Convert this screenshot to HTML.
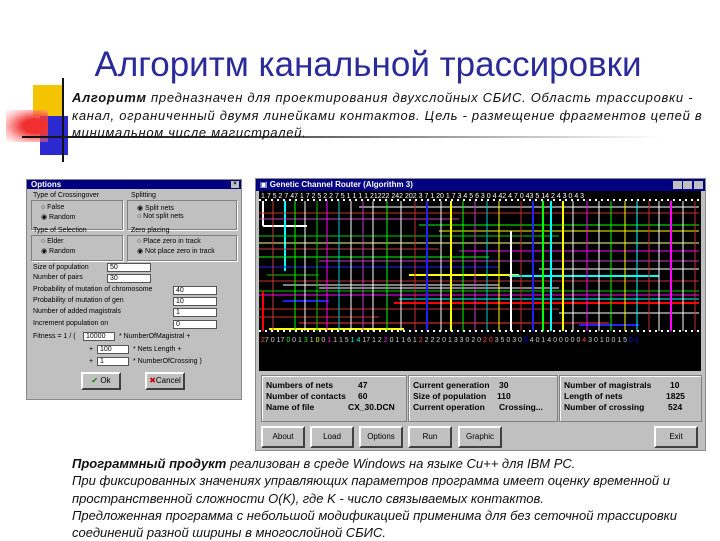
<!DOCTYPE html>
<html><head><meta charset="utf-8">
<style>
*{margin:0;padding:0;box-sizing:border-box}
body{width:720px;height:540px;background:#fff;position:relative;overflow:hidden;font-family:"Liberation Sans","DejaVu Sans",sans-serif}
.abs{position:absolute}
.title{left:0;width:736px;top:45px;text-align:center;font-size:35px;color:#2a2a9a}
.para{left:72px;top:89px;width:640px;font-size:13px;letter-spacing:0.72px;line-height:17.5px;font-style:italic;color:#111}
.bot{left:72px;top:455px;width:660px;font-size:13px;line-height:17.3px;font-style:italic;color:#111;white-space:nowrap}
.win{background:#c0c0c0;border:1px solid #888}
.tb{background:#000080;color:#fff;font-size:8px;font-weight:bold;height:10px;line-height:10px;padding-left:4px}
.lbl{font-size:7px;color:#000;white-space:nowrap}
.inp{background:#fff;border:1px solid #555;font-size:7px;line-height:8px;padding-left:2px}
.grp{border:1px solid #808080;box-shadow:1px 1px 0 #fff}
.btn{background:#c0c0c0;border:2px solid;border-color:#fff #404040 #404040 #fff;font-size:8px;text-align:center}
.pan{border:1px solid #808080;box-shadow:inset 1px 1px 0 #fff;font-size:8.5px;font-weight:bold;line-height:11px;padding:4px 4px}
</style></head><body>

<div class="abs title">Алгоритм канальной трассировки</div>

<div class="abs" style="left:33px;top:85px;width:30px;height:31px;background:#f5c400"></div>
<div class="abs" style="left:40px;top:116px;width:28px;height:39px;background:#2a2ad0"></div>
<div class="abs" style="left:6px;top:110px;width:42px;height:32px;background:radial-gradient(ellipse at 70% 50%,#f03030 30%,rgba(255,120,120,.5) 70%,rgba(255,255,255,0) 100%)"></div>
<div class="abs" style="left:62px;top:78px;width:2px;height:84px;background:#111"></div>
<div class="abs" style="left:22px;top:136px;width:640px;height:2px;background:linear-gradient(90deg,#111 0%,#333 30%,#aaa 70%,rgba(255,255,255,0) 100%)"></div>

<div class="abs para"><b>Алгоритм</b> предназначен для проектирования двухслойных СБИС. Область трассировки - канал, ограниченный двумя линейками контактов. Цель - размещение фрагментов цепей в минимальном числе магистралей.</div>

<div class="abs win" style="left:26px;top:179px;width:216px;height:221px;">
 <div class="tb" style="height:9px;line-height:9px">Options<span style="float:right;background:#c0c0c0;color:#000;width:8px;height:7px;margin:1px 2px;font-size:6px;line-height:7px;text-align:center">×</span></div>
 <div class="abs lbl" style="left:6px;top:12px">Type of Crossingover</div>
 <div class="abs grp" style="left:4px;top:20px;width:92px;height:30px"></div>
 <div class="abs lbl" style="left:14px;top:24px">○ False</div>
 <div class="abs lbl" style="left:14px;top:33px">◉ Random</div>
 <div class="abs lbl" style="left:104px;top:12px">Splitting</div>
 <div class="abs grp" style="left:100px;top:20px;width:110px;height:30px"></div>
 <div class="abs lbl" style="left:110px;top:24px">◉ Split nets</div>
 <div class="abs lbl" style="left:110px;top:33px">○ Not split nets</div>
 <div class="abs lbl" style="left:6px;top:47px">Type of Selection</div>
 <div class="abs grp" style="left:4px;top:55px;width:92px;height:26px"></div>
 <div class="abs lbl" style="left:14px;top:58px">○ Elder</div>
 <div class="abs lbl" style="left:14px;top:67px">◉ Random</div>
 <div class="abs lbl" style="left:104px;top:47px">Zero placing</div>
 <div class="abs grp" style="left:100px;top:55px;width:110px;height:26px"></div>
 <div class="abs lbl" style="left:110px;top:58px">○ Place zero in track</div>
 <div class="abs lbl" style="left:110px;top:67px">◉ Not place zero in track</div>
 <div class="abs lbl" style="left:6px;top:84px">Size of population</div>
 <div class="abs inp" style="left:80px;top:83px;width:44px;height:9px">50</div>
 <div class="abs lbl" style="left:6px;top:94px">Number of pairs</div>
 <div class="abs inp" style="left:80px;top:94px;width:44px;height:9px">30</div>
 <div class="abs lbl" style="left:6px;top:106px">Probability of mutation of chromosome</div>
 <div class="abs inp" style="left:146px;top:106px;width:44px;height:9px">40</div>
 <div class="abs lbl" style="left:6px;top:117px">Probability of mutation of gen</div>
 <div class="abs inp" style="left:146px;top:117px;width:44px;height:9px">10</div>
 <div class="abs lbl" style="left:6px;top:128px">Number of added magistrals</div>
 <div class="abs inp" style="left:146px;top:128px;width:44px;height:9px">1</div>
 <div class="abs lbl" style="left:6px;top:140px">Increment population on</div>
 <div class="abs inp" style="left:146px;top:140px;width:44px;height:9px">0</div>
 <div class="abs lbl" style="left:6px;top:153px">Fitness = 1 / ( </div>
 <div class="abs inp" style="left:56px;top:152px;width:32px;height:9px">10000</div>
 <div class="abs lbl" style="left:92px;top:153px">* NumberOfMagistral +</div>
 <div class="abs lbl" style="left:62px;top:166px">+</div>
 <div class="abs inp" style="left:70px;top:165px;width:32px;height:9px">100</div>
 <div class="abs lbl" style="left:106px;top:166px">* Nets Length +</div>
 <div class="abs lbl" style="left:62px;top:178px">+</div>
 <div class="abs inp" style="left:70px;top:177px;width:32px;height:9px">1</div>
 <div class="abs lbl" style="left:106px;top:178px">* NumberOfCrossing )</div>
 <div class="abs btn" style="left:54px;top:192px;width:40px;height:18px;line-height:14px"><span style="color:#080">✔</span> Ok</div>
 <div class="abs btn" style="left:118px;top:192px;width:40px;height:18px;line-height:14px"><span style="color:#c00">✖</span>Cancel</div>
</div>

<div class="abs win" style="left:255px;top:178px;width:451px;height:273px;">
 <div class="tb" style="height:12px;line-height:12px;background:#000080">▣ Genetic Channel Router (Algorithm 3)
  <span style="float:right;margin-right:2px;font-size:6px;color:#000"><span style="background:#c0c0c0;display:inline-block;width:9px;height:8px;margin-top:2px"></span> <span style="background:#c0c0c0;display:inline-block;width:9px;height:8px"></span> <span style="background:#c0c0c0;display:inline-block;width:9px;height:8px"></span></span></div>
 <div class="abs" style="left:3px;top:12px;width:442px;height:180px;background:#000;overflow:hidden">
 <svg width="442" height="180" viewBox="0 0 442 180" style="display:block">
  <g stroke-width="1" fill="none">
   <line x1="4" y1="35" x2="48" y2="35" stroke="#fff" stroke-width="2"/>
   <line x1="4" y1="10" x2="4" y2="35" stroke="#fff" stroke-width="2"/>
   <line x1="26" y1="10" x2="26" y2="80" stroke="#0ff" stroke-width="2"/>
   <line x1="0" y1="22" x2="440" y2="22" stroke="#c03030"/>
   <line x1="0" y1="28" x2="200" y2="28" stroke="#c040c0"/>
   <line x1="100" y1="16" x2="440" y2="16" stroke="#fff"/>
   <line x1="180" y1="40" x2="440" y2="40" stroke="#ff0"/>
   <line x1="0" y1="45" x2="300" y2="45" stroke="#0c0"/>
   <line x1="160" y1="34" x2="440" y2="34" stroke="#0f0"/>
   <line x1="0" y1="52" x2="440" y2="52" stroke="#ff8"/>
   <line x1="0" y1="58" x2="180" y2="58" stroke="#c04040"/>
   <line x1="200" y1="60" x2="440" y2="60" stroke="#f0f"/>
   <line x1="0" y1="66" x2="230" y2="66" stroke="#0f0"/>
   <line x1="60" y1="70" x2="440" y2="70" stroke="#c040c0"/>
   <line x1="0" y1="76" x2="240" y2="76" stroke="#2020f0"/>
   <line x1="280" y1="78" x2="440" y2="78" stroke="#fff"/>
   <line x1="8" y1="84" x2="60" y2="84" stroke="#0c0"/>
   <line x1="150" y1="84" x2="260" y2="84" stroke="#ff0" stroke-width="2"/>
   <line x1="250" y1="85" x2="400" y2="85" stroke="#0ff" stroke-width="2"/>
   <line x1="0" y1="90" x2="440" y2="90" stroke="#c03030"/>
   <line x1="24" y1="94" x2="240" y2="94" stroke="#fff"/>
   <line x1="0" y1="100" x2="440" y2="100" stroke="#0c0"/>
   <line x1="60" y1="97" x2="300" y2="97" stroke="#fff"/>
   <line x1="0" y1="104" x2="440" y2="104" stroke="#f0f"/>
   <line x1="140" y1="108" x2="440" y2="108" stroke="#0ff"/>
   <line x1="24" y1="110" x2="70" y2="110" stroke="#2020f0" stroke-width="2"/>
   <line x1="135" y1="112" x2="440" y2="112" stroke="#f00" stroke-width="2"/>
   <line x1="0" y1="118" x2="300" y2="118" stroke="#c03030"/>
   <line x1="0" y1="126" x2="120" y2="126" stroke="#c03030"/>
   <line x1="40" y1="132" x2="350" y2="132" stroke="#f33"/>
   <line x1="320" y1="134" x2="380" y2="134" stroke="#2020f0" stroke-width="2"/>
   <line x1="10" y1="138" x2="145" y2="138" stroke="#ff0" stroke-width="2"/>
   <line x1="300" y1="122" x2="440" y2="122" stroke="#fff"/>
  </g>
  <g stroke-width="1">
   <line x1="14" y1="10" x2="14" y2="140" stroke="#c04040"/>
   <line x1="36" y1="10" x2="36" y2="140" stroke="#0f0"/>
   <line x1="46" y1="10" x2="46" y2="140" stroke="#fff"/>
   <line x1="58" y1="10" x2="58" y2="140" stroke="#0c0"/>
   <line x1="68" y1="10" x2="68" y2="140" stroke="#f0f"/>
   <line x1="80" y1="10" x2="80" y2="140" stroke="#0cc"/>
   <line x1="92" y1="10" x2="92" y2="140" stroke="#fff"/>
   <line x1="104" y1="10" x2="104" y2="140" stroke="#c040c0"/>
   <line x1="114" y1="10" x2="114" y2="140" stroke="#fff"/>
   <line x1="128" y1="10" x2="128" y2="140" stroke="#0f0"/>
   <line x1="142" y1="10" x2="142" y2="140" stroke="#fff"/>
   <line x1="156" y1="10" x2="156" y2="140" stroke="#c03030"/>
   <line x1="168" y1="10" x2="168" y2="140" stroke="#2020f0" stroke-width="2"/>
   <line x1="182" y1="10" x2="182" y2="140" stroke="#fff"/>
   <line x1="192" y1="10" x2="192" y2="140" stroke="#ff0" stroke-width="2"/>
   <line x1="204" y1="10" x2="204" y2="140" stroke="#0f0"/>
   <line x1="216" y1="10" x2="216" y2="140" stroke="#c040c0"/>
   <line x1="228" y1="10" x2="228" y2="140" stroke="#0cc"/>
   <line x1="240" y1="10" x2="240" y2="140" stroke="#ff0"/>
   <line x1="252" y1="40" x2="252" y2="140" stroke="#fff" stroke-width="2"/>
   <line x1="262" y1="10" x2="262" y2="140" stroke="#c03030"/>
   <line x1="274" y1="10" x2="274" y2="140" stroke="#2020f0" stroke-width="2"/>
   <line x1="284" y1="10" x2="284" y2="140" stroke="#0f0" stroke-width="2"/>
   <line x1="292" y1="10" x2="292" y2="140" stroke="#0ff" stroke-width="2"/>
   <line x1="304" y1="10" x2="304" y2="140" stroke="#ff0" stroke-width="2"/>
   <line x1="314" y1="10" x2="314" y2="140" stroke="#fff"/>
   <line x1="328" y1="10" x2="328" y2="140" stroke="#f0f"/>
   <line x1="340" y1="10" x2="340" y2="140" stroke="#fff"/>
   <line x1="352" y1="10" x2="352" y2="140" stroke="#0f0"/>
   <line x1="366" y1="10" x2="366" y2="140" stroke="#ff0"/>
   <line x1="378" y1="10" x2="378" y2="140" stroke="#0ff"/>
   <line x1="390" y1="10" x2="390" y2="140" stroke="#c03030"/>
   <line x1="400" y1="10" x2="400" y2="140" stroke="#fff"/>
   <line x1="412" y1="10" x2="412" y2="140" stroke="#f0f" stroke-width="2"/>
   <line x1="424" y1="10" x2="424" y2="140" stroke="#fff"/>
   <line x1="436" y1="10" x2="436" y2="140" stroke="#c03030"/>
   <line x1="4" y1="100" x2="4" y2="140" stroke="#f00" stroke-width="2"/>
  </g>
  <line x1="0" y1="9" x2="442" y2="9" stroke="#fff" stroke-width="2" stroke-dasharray="2 4"/>
  <line x1="0" y1="140" x2="442" y2="140" stroke="#fff" stroke-width="2" stroke-dasharray="2 4"/>
  <text x="2" y="7" font-size="7" fill="#fff" font-family="Liberation Sans">1 7  5 2 7  47 1 7 2  5 2 2 7  5 1 1 1 1   21222 242 202 3 7  1 20  1 7 3 4 5 6  3 0  4 42 4 7 0 43 5 14 2 4 3 0 4 3</text>
  <text x="2" y="151" font-size="7" fill="#ccc" font-family="Liberation Sans"><tspan fill="#f44">2</tspan>7 0 17 <tspan fill="#0f0">0</tspan> 0  1 <tspan fill="#0f0">3</tspan> 1 <tspan fill="#ff0">0</tspan> 0 <tspan fill="#f0f">1</tspan>   1 1 5 <tspan fill="#0ff">1 4</tspan> 17 1 2 <tspan fill="#f0f">2</tspan> 0 1 1 6 1 <tspan fill="#f44">2</tspan> 2 2  2 0   1 3 3 0 2 0 <tspan fill="#f44">2 0</tspan> 3 5 0  3 0 <tspan fill="#00f">0</tspan> 4 0 1  4 0 0 0 0 0  <tspan fill="#f44">4</tspan> 3 0 1 0 0 1 5 <tspan fill="#00f">0 1</tspan></text>
 </svg>
 </div>
 <div class="abs pan" style="left:5px;top:196px;width:146px;height:47px"><div>Numbers of nets<span style="position:absolute;left:96px">47</span></div><div>Number of contacts<span style="position:absolute;left:96px">60</span></div><div>Name of file<span style="position:absolute;left:86px">CX_30.DCN</span></div></div>
 <div class="abs pan" style="left:152px;top:196px;width:150px;height:47px"><div>Current generation<span style="position:absolute;left:90px">30</span></div><div>Size of population<span style="position:absolute;left:88px">110</span></div><div>Current operation<span style="position:absolute;left:90px">Crossing...</span></div></div>
 <div class="abs pan" style="left:303px;top:196px;width:143px;height:47px"><div>Number of magistrals<span style="position:absolute;left:110px">10</span></div><div>Length of nets<span style="position:absolute;left:106px">1825</span></div><div>Number of crossing<span style="position:absolute;left:108px">524</span></div></div>
 <div class="abs btn" style="left:5px;top:247px;width:44px;height:22px;line-height:18px">About</div>
 <div class="abs btn" style="left:54px;top:247px;width:44px;height:22px;line-height:18px">Load</div>
 <div class="abs btn" style="left:103px;top:247px;width:44px;height:22px;line-height:18px">Options</div>
 <div class="abs btn" style="left:152px;top:247px;width:44px;height:22px;line-height:18px">Run</div>
 <div class="abs btn" style="left:202px;top:247px;width:44px;height:22px;line-height:18px">Graphic</div>
 <div class="abs btn" style="left:398px;top:247px;width:44px;height:22px;line-height:18px">Exit</div>
</div>

<div class="abs bot"><b>Программный продукт</b> реализован в среде Windows на языке Си++ для IBM PC.<br>При фиксированных значениях управляющих параметров программа имеет оценку временной и<br>пространственной сложности O(K), где K - число связываемых контактов.<br>Предложенная программа с небольшой модификацией применима для без сеточной трассировки<br>соединений разной ширины в многослойной СБИС.</div>
</body></html>
